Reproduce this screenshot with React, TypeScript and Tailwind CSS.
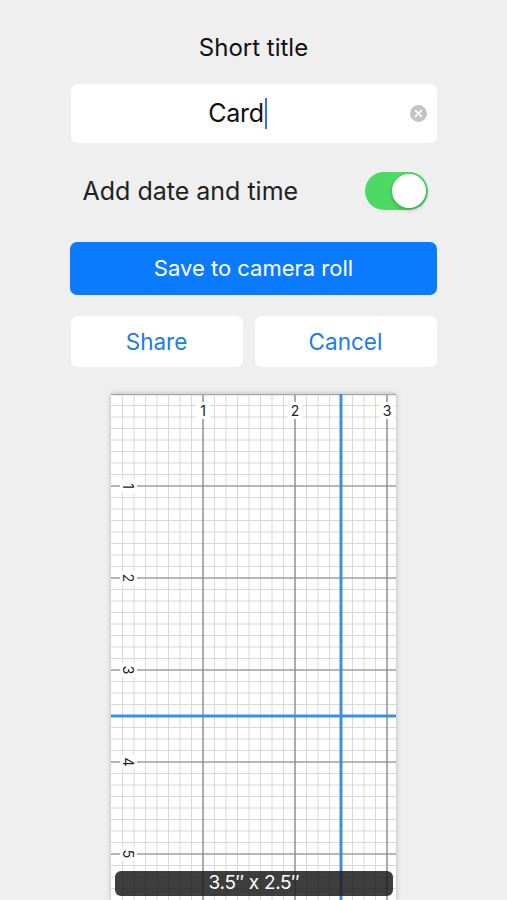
import React from 'react';

const INCH = 92;
const EIGHTH = INCH / 8;
const GRID_W = 285;
const GRID_H = 506;

function Toggle() {
  return (
    <div className="relative h-[38px] w-[63px] rounded-full bg-[#4cd964]">
      <div className="absolute right-[2px] top-[2px] h-[34px] w-[34px] rounded-full bg-white shadow-[0_2px_4px_rgba(0,0,0,0.25)]" />
    </div>
  );
}

function ClearIcon() {
  return (
    <svg width="17" height="17" viewBox="0 0 17 17">
      <circle cx="8.5" cy="8.5" r="8.5" fill="#c4c4c8" />
      <path d="M5.6 5.6 L11.4 11.4 M11.4 5.6 L5.6 11.4" stroke="#fff" strokeWidth="1.8" strokeLinecap="round" />
    </svg>
  );
}

function GridSheet() {
  const vMinor: number[] = [];
  for (let x = EIGHTH; x < GRID_W; x += EIGHTH) vMinor.push(x);
  const hMinor: number[] = [];
  for (let y = EIGHTH; y < GRID_H; y += EIGHTH) hMinor.push(y);

  const vMajor = [1, 2, 3];
  const hMajor = [1, 2, 3, 4, 5];

  return (
    <svg width={GRID_W} height={GRID_H} className="block">
      <defs>
        <filter id="blur" x="-50%" y="-50%" width="200%" height="200%">
          <feGaussianBlur stdDeviation="1.6" />
        </filter>
      </defs>
      <rect width={GRID_W} height={GRID_H} fill="#fff" />
      {vMinor.map((x) => (
        <line key={'v' + x} x1={x} y1={0} x2={x} y2={GRID_H} stroke="#d8d8d8" strokeWidth="1" />
      ))}
      {hMinor.map((y) => (
        <line key={'h' + y} x1={0} y1={y} x2={GRID_W} y2={y} stroke="#d8d8d8" strokeWidth="1" />
      ))}
      {vMajor.map((n) => (
        <line key={'V' + n} x1={n * INCH} y1={0} x2={n * INCH} y2={GRID_H} stroke="#808080" strokeWidth="1.2" />
      ))}
      {hMajor.map((n) => (
        <line key={'H' + n} x1={0} y1={n * INCH} x2={GRID_W} y2={n * INCH} stroke="#808080" strokeWidth="1.2" />
      ))}
      <line x1={0} y1={0.5} x2={GRID_W} y2={0.5} stroke="#a8a8a8" strokeWidth="1.5" />

      {/* top ruler numbers */}
      {vMajor.map((n) => (
        <g key={'tl' + n}>
          <rect x={n * INCH - 7} y={8} width={14} height={17} fill="#fff" />
          <text
            x={n * INCH}
            y={21.5}
            textAnchor="middle"
            fontSize="14"
            fill="#222"
            fontFamily="Inter, sans-serif"
          >
            {n}
          </text>
        </g>
      ))}
      {/* left ruler numbers, rotated */}
      {hMajor.map((n) => (
        <g key={'ll' + n} transform={`translate(17 ${n * INCH}) rotate(90)`}>
          <rect x={-7} y={-9} width={14} height={17} fill="#fff" />
          <text x={0} y={5} textAnchor="middle" fontSize="14" fill="#222" fontFamily="Inter, sans-serif">
            {n}
          </text>
        </g>
      ))}

      {/* card outline */}
      <line x1={230} y1={0} x2={230} y2={GRID_H} stroke="#000" strokeOpacity="0.35" strokeWidth="4" filter="url(#blur)" transform="translate(1 1)" />
      <line x1={0} y1={322} x2={GRID_W} y2={322} stroke="#000" strokeOpacity="0.35" strokeWidth="4" filter="url(#blur)" transform="translate(1 2)" />
      <line x1={230} y1={0} x2={230} y2={GRID_H} stroke="#3f8fdc" strokeWidth="3" />
      <line x1={0} y1={322} x2={GRID_W} y2={322} stroke="#3f8fdc" strokeWidth="3" />
    </svg>
  );
}

export default function App() {
  return (
    <div
      className="flex h-[900px] w-full flex-col items-center overflow-hidden bg-[#efeff0]"
      style={{ fontFamily: 'Inter, "Noto Sans", sans-serif' }}
    >
      <h1 className="pt-[33px] text-[24px] leading-[30px] text-[#111]">Short title</h1>

      {/* title field */}
      <div className="relative mt-[21px] flex h-[59px] w-[366px] items-center justify-center rounded-[7px] bg-white">
        <div className="mr-[32px] flex items-center">
          <span className="text-[25px] leading-none tracking-[-0.3px] text-[#111]">Card</span>
          <span className="ml-[1px] h-[31px] w-[2px] bg-[#3c6cf0]" />
        </div>
        <div className="absolute right-[10px] top-[21px]">
          <ClearIcon />
        </div>
      </div>

      {/* date toggle */}
      <div className="mt-[29px] flex h-[38px] w-[366px] items-center justify-between pl-[12px] pr-[9px]">
        <span className="text-[25px] leading-none text-[#222]">Add date and time</span>
        <Toggle />
      </div>

      <button className="mt-[32px] flex h-[53px] w-[367px] items-center justify-center rounded-[7px] bg-[#0a7bff] text-[22px] text-white">
        Save to camera roll
      </button>

      <div className="mt-[21px] flex w-[366px] gap-[12px]">
        <button className="flex h-[51px] w-[172px] items-center justify-center rounded-[7px] bg-white text-[22.5px] text-[#1a7ee6]">
          Share
        </button>
        <button className="flex h-[51px] flex-1 items-center justify-center rounded-[7px] bg-white text-[22.5px] text-[#1a7ee6]">
          Cancel
        </button>
      </div>

      {/* ruler sheet */}
      <div className="relative mt-[27px] w-[285px] shadow-[0_0_5px_rgba(0,0,0,0.25)]">
        <GridSheet />
        <div className="absolute bottom-[4px] left-[4px] right-[3px] flex h-[25px] items-center justify-center rounded-[6px] bg-[#1c1c1c]/85 text-[19px] tracking-[-0.3px] text-white">
          3.5″ x 2.5″
        </div>
      </div>
    </div>
  );
}
